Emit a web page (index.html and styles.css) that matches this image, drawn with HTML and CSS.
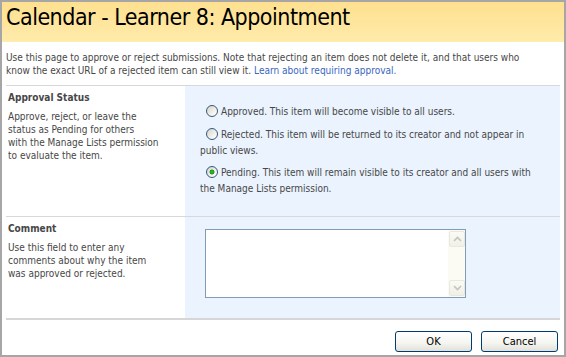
FILE: index.html
```html
<!DOCTYPE html>
<html>
<head>
<meta charset="utf-8">
<link rel="stylesheet" href="styles.css">
</head>
<body>
<div class="dialog">
  <div class="titlebar"><h1 class="title">Calendar - Learner 8: Appointment</h1></div>
  <div class="content">
    <p class="intro">Use this page to approve or reject submissions. Note that rejecting an item does not delete it, and that users who<br>know the exact URL of a rejected item can still view it. <a class="link" href="#">Learn about requiring approval.</a></p>
    <div class="section">
      <div class="label-cell">
        <h3 class="label">Approval Status</h3>
        <p class="desc">Approve, reject, or leave the<br>status as Pending for others<br>with the Manage Lists permission<br>to evaluate the item.</p>
      </div>
      <div class="field-cell field-options">
        <div class="option option-first"><input class="radio" type="radio" name="s">Approved. This item will become visible to all users.</div>
        <div class="option"><input class="radio" type="radio" name="s">Rejected. This item will be returned to its creator and not appear in<br>public views.</div>
        <div class="option"><input class="radio" type="radio" name="s" checked>Pending. This item will remain visible to its creator and all users with<br>the Manage Lists permission.</div>
      </div>
    </div>
    <div class="section section-last">
      <div class="label-cell">
        <h3 class="label">Comment</h3>
        <p class="desc">Use this field to enter any<br>comments about why the item<br>was approved or rejected.</p>
      </div>
      <div class="field-cell field-comment">
        <div class="textbox">
          <textarea class="textarea"></textarea>
          <div class="scrollbar">
            <div class="sb-btn"><svg width="9" height="6" viewBox="0 0 9 6"><path d="M1 5 L4.5 1.5 L8 5" fill="none" stroke="#c4c4bc" stroke-width="1.6"/></svg></div>
            <div class="sb-track"></div>
            <div class="sb-btn"><svg width="9" height="6" viewBox="0 0 9 6"><path d="M1 1 L4.5 4.5 L8 1" fill="none" stroke="#c4c4bc" stroke-width="1.6"/></svg></div>
          </div>
        </div>
      </div>
    </div>
    <div class="buttons">
      <button class="btn">OK</button>
      <button class="btn">Cancel</button>
    </div>
  </div>
</div>
</body>
</html>
```
FILE: styles.css
```css
html, body {
  margin: 0;
  padding: 0;
  background: #ffffff;
}
.dialog {
  width: 566px;
  height: 357px;
  box-sizing: border-box;
  border: 2px solid #a6a6a6;
  display: flex;
  flex-direction: column;
  font-family: "DejaVu Sans Condensed", "DejaVu Sans", sans-serif;
  font-size: 10px;
  color: #474747;
  overflow: hidden;
}
.titlebar {
  height: 40px;
  flex: none;
  background: linear-gradient(#fee08f, #ffebab);
  padding-left: 4px;
}
.title {
  margin: 0;
  font-weight: normal;
  font-size: 23px;
  letter-spacing: -0.5px;
  line-height: 30px;
  color: #000000;
}
.content {
  padding: 0 4px;
  flex: 1;
  display: flex;
  flex-direction: column;
}
.intro {
  margin: 0;
  padding-top: 9px;
  padding-bottom: 8px;
  line-height: 13px;
  white-space: nowrap;
}
.link {
  color: #3966bf;
  text-decoration: none;
}
.section {
  display: grid;
  grid-template-columns: 179px 1fr;
  border-top: 1px solid #d8d8d8;
}
.section-last {
  border-bottom: 2px solid #d6d6d6;
}
.label-cell {
  padding: 5px 2px;
}
.label {
  margin: 0 0 6px;
  font-size: 10px;
  line-height: 13px;
  font-weight: bold;
  color: #474747;
}
.desc {
  margin: 0;
  line-height: 13px;
  white-space: nowrap;
}
.field-cell {
  background: #ebf3ff;
}
.field-options {
  padding: 18px 6px 19px 15px;
  height: 93px;
}
.option {
  line-height: 16px;
  margin-bottom: 6px;
  white-space: nowrap;
}
.option-first {
  margin-bottom: 7px;
}
.option:last-child {
  margin-bottom: 0;
}
.radio {
  -webkit-appearance: none;
  appearance: none;
  width: 12px;
  height: 12px;
  margin: 0 3px 0 6px;
  vertical-align: -2px;
  border: 1px solid #34587a;
  border-radius: 50%;
  background: linear-gradient(135deg, #d4d2ca, #f6f6f3 70%, #ffffff);
  box-sizing: border-box;
}
.radio:checked {
  background: radial-gradient(circle, #39b539 0, #1f9a1f 2.2px, transparent 2.8px), linear-gradient(135deg, #d4d2ca, #f6f6f3 70%, #ffffff);
}
.field-comment {
  height: 101px;
  box-sizing: border-box;
  padding: 12px 0 0 20px;
}
.textbox {
  width: 261px;
  height: 69px;
  box-sizing: border-box;
  border: 1px solid #7f9db9;
  background: #ffffff;
  display: flex;
}
.textarea {
  flex: 1;
  border: none;
  margin: 0;
  padding: 0;
  resize: none;
  outline: none;
  background: #ffffff;
}
.scrollbar {
  width: 17px;
  flex: none;
  background: #fbfbf4;
  display: flex;
  flex-direction: column;
  padding: 1px 0 1px 1px;
  box-sizing: border-box;
}
.sb-btn {
  width: 16px;
  height: 16px;
  box-sizing: border-box;
  border: 1px solid #e8e8df;
  border-radius: 2px;
  background: linear-gradient(#fbfbf6, #f0f0e8);
  display: flex;
  align-items: center;
  justify-content: center;
  flex: none;
}
.sb-track {
  flex: 1;
}
.buttons {
  display: flex;
  justify-content: flex-end;
  gap: 9px;
  padding: 11px 2px 0 0;
}
.btn {
  width: 77px;
  height: 21px;
  box-sizing: border-box;
  border: 1px solid #003c74;
  border-radius: 3px;
  background: linear-gradient(#ffffff, #f4f4f0 60%, #e2e0d8);
  font-family: "DejaVu Sans Condensed", "DejaVu Sans", sans-serif;
  font-size: 11px;
  color: #000000;
  padding: 0;
}
```
